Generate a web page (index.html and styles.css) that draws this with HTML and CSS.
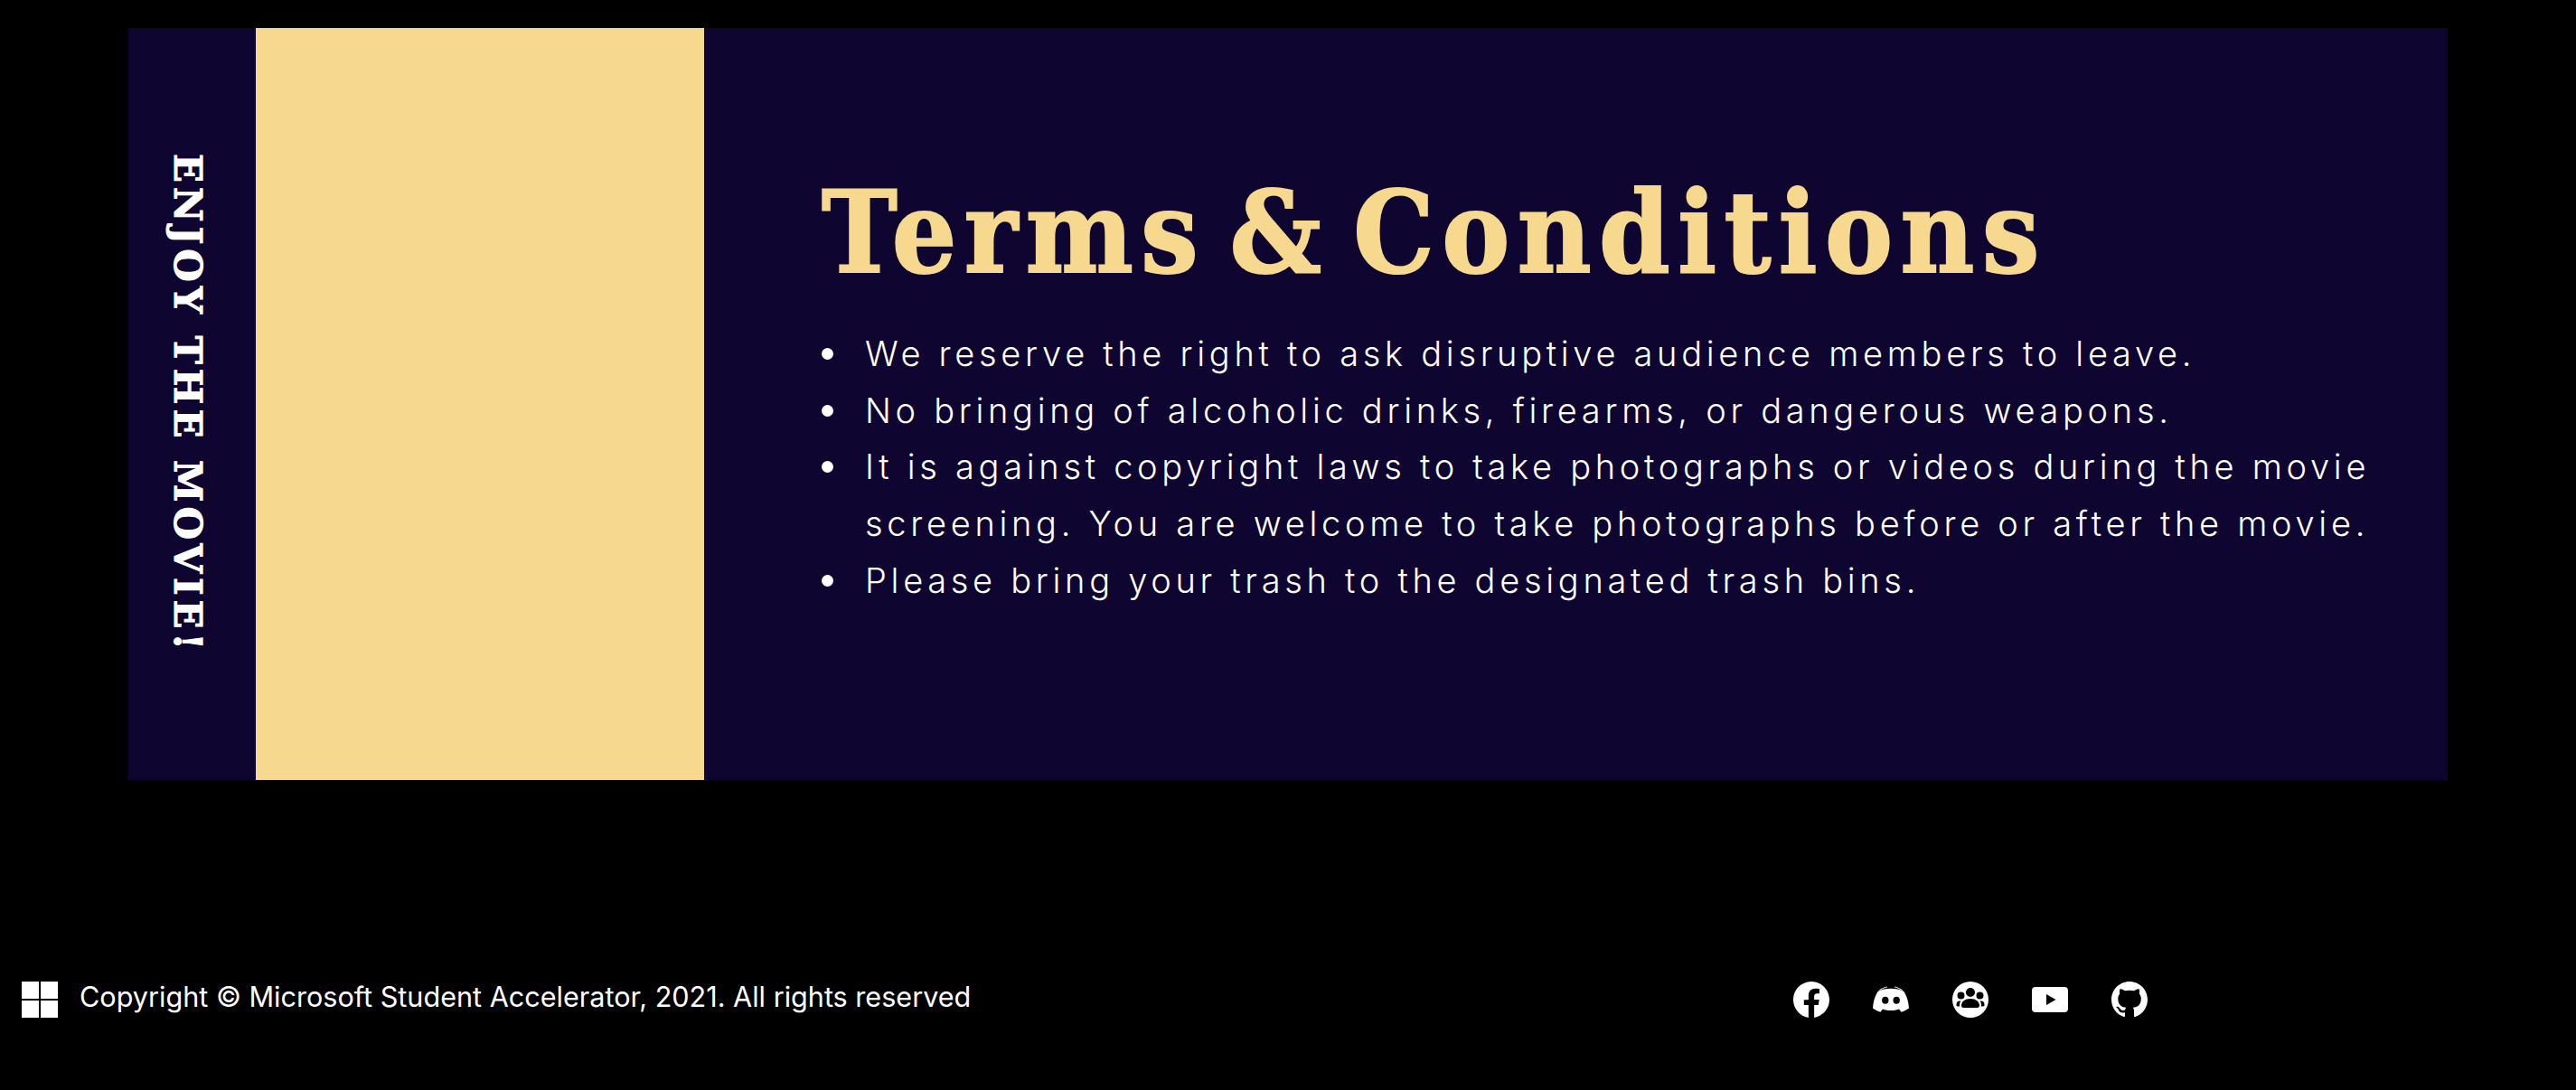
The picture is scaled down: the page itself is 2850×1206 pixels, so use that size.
FILE: index.html
```html
<!DOCTYPE html>
<html lang="en">
<head>
    <meta charset="UTF-8">
    <meta name="viewport" content="width=device-width, initial-scale=1.0">
    <title>Terms &amp; Conditions</title>
    <link rel="stylesheet" href="styles.css">
</head>
<body>

    <div class="ticket">
        <div class="strip"><span>ENJOY THE MOVIE!</span></div>
        <div class="stub"></div>
        <div class="terms">
            <h1>Terms &amp; Conditions</h1>
            <ul>
                <li>We reserve the right to ask disruptive audience members to leave.</li>
                <li>No bringing of alcoholic drinks, firearms, or dangerous weapons.</li>
                <li>It is against copyright laws to take photographs or videos during the movie screening. You are welcome to take photographs before or after the movie.</li>
                <li>Please bring your trash to the designated trash bins.</li>
            </ul>
        </div>
    </div>

    <div class="footer">
        <div class="copyright">
            <div class="logo"><i></i><i></i><i></i><i></i></div>
            <span>Copyright © Microsoft Student Accelerator, 2021. All rights reserved</span>
        </div>
        <div class="social">
            <!-- Facebook -->
            <svg viewBox="0 0 16 16"><path d="M16 8.049c0-4.446-3.582-8.05-8-8.05C3.58 0-.002 3.603-.002 8.05c0 4.017 2.926 7.347 6.75 7.951v-5.625h-2.03V8.05H6.75V6.275c0-2.017 1.195-3.131 3.022-3.131.876 0 1.791.157 1.791.157v1.98h-1.009c-.993 0-1.303.621-1.303 1.258v1.51h2.218l-.354 2.326H9.25V16c3.824-.604 6.75-3.934 6.75-7.951z"/></svg>
            <!-- Discord -->
            <svg viewBox="0 0 40 40"><path d="M7 9.5C10 7.3 13 6 16 5.400L16.300 6.300C13.300 7 10.300 8.200 7.600 10ZM33 9.500C30 7.300 27 6 24 5.400L23.700 6.300C26.700 7 29.700 8.200 32.400 10Z"/><path fill-rule="evenodd" d="M5.500 11C9.800 8.500 14.500 7.800 20 7.800S30.200 8.500 34.500 11C37.500 16 39.600 22 40 29.500C37.500 31.400 34.500 32.800 31.600 33.800L29 30.400C25.900 31.600 23 32 20 32S14.100 31.600 11 30.400L8.400 33.800C5.500 32.800 2.500 31.400 0 29.500C.4 22 2.500 16 5.500 11ZM13.800 16.800A3.700 4 0 1 0 13.800 24.800A3.700 4 0 1 0 13.800 16.800ZM26.200 16.800A3.700 4 0 1 0 26.200 24.800A3.700 4 0 1 0 26.200 16.800Z"/></svg>
            <!-- Community -->
            <svg viewBox="0 0 40 40"><path fill-rule="evenodd" d="M20 0A20 20 0 1 0 20 40A20 20 0 1 0 20 0ZM20 7A5 5 0 1 1 20 17A5 5 0 1 1 20 7ZM9.500 11.500A4 4 0 1 1 9.500 19.500A4 4 0 1 1 9.500 11.500ZM30.500 11.500A4 4 0 1 1 30.500 19.500A4 4 0 1 1 30.500 11.500ZM20 19C26 19 30 22.500 30 26.500C30 28.500 28.500 29 27 29H13C11.500 29 10 28.500 10 26.500C10 22.500 14 19 20 19ZM8 21.500C8.500 21.500 9 21.500 9.500 21.600C8.300 23.200 7.800 25 8 27.500H6C4.500 27.500 4.500 26.500 4.500 25.500C4.500 23 6 21.500 8 21.500ZM32 21.500C34 21.500 35.500 23 35.500 25.500C35.500 26.500 35.500 27.500 34 27.500H32C32.200 25 31.700 23.200 30.500 21.600C31 21.500 31.500 21.500 32 21.500Z"/></svg>
            <!-- YouTube -->
            <svg viewBox="0 0 40 40"><path fill-rule="evenodd" d="M4 6H36C38.500 6 40 7.500 40 10V30C40 32.500 38.500 34 36 34H4C1.500 34 0 32.500 0 30V10C0 7.500 1.500 6 4 6ZM16 14V26L26.500 20Z"/></svg>
            <!-- GitHub -->
            <svg viewBox="0 0 16 16"><path d="M8 0C3.58 0 0 3.58 0 8c0 3.54 2.29 6.53 5.47 7.59.4.07.55-.17.55-.38 0-.19-.01-.82-.01-1.49-2.01.37-2.53-.49-2.69-.94-.09-.23-.48-.94-.82-1.13-.28-.15-.68-.52-.01-.53.63-.01 1.08.58 1.23.82.72 1.21 1.87.87 2.33.66.07-.52.28-.87.51-1.07-1.78-.2-3.64-.89-3.64-3.95 0-.87.31-1.59.82-2.15-.08-.2-.36-1.02.08-2.12 0 0 .67-.21 2.2.82.64-.18 1.32-.27 2-.27.68 0 1.36.09 2 .27 1.53-1.04 2.2-.82 2.2-.82.44 1.1.16 1.92.08 2.12.51.56.82 1.27.82 2.15 0 3.07-1.87 3.75-3.65 3.95.29.25.54.73.54 1.48 0 1.07-.01 1.93-.01 2.2 0 .21.15.46.55.38A8.012 8.012 0 0 0 16 8c0-4.42-3.58-8-8-8z"/></svg>
        </div>
    </div>

</body>
</html>
```

FILE: styles.css
```css
body {
    margin: 0;
    background-color: #000;
    color: #fff;
    font-family: Inter, sans-serif;
}
.ticket {
    display: flex;
    width: 2566px;
    height: 832px;
    margin: 31px 0 0 142px;
    background-color: #0e0630;
}
.strip {
    width: 141px;
    display: flex;
    align-items: center;
    justify-content: center;
    padding-right: 10px;
    box-sizing: border-box;
}
.strip span {
    writing-mode: vertical-rl;
    font-family: "DejaVu Serif", serif;
    font-weight: bold;
    font-size: 42px;
    letter-spacing: 5px;
    -webkit-text-stroke: 1px #fff;
    white-space: nowrap;
}
.stub {
    width: 496px;
    background-color: #f6d98f;
}
.terms {
    flex: 1;
    padding: 136px 60px 0 130px;
}
h1 {
    margin: 0;
    font-family: "DejaVu Serif Condensed", "DejaVu Serif", serif;
    font-stretch: condensed;
    font-weight: bold;
    font-size: 125px;
    line-height: 180px;
    letter-spacing: 8.5px;
    word-spacing: -21px;
    -webkit-text-stroke: 2px #f6d98f;
    color: #f6d98f;
    white-space: nowrap;
}
ul {
    margin: 13px 0 0;
    padding: 0;
    list-style: none;
    font-size: 38px;
    font-weight: 300;
    line-height: 62.7px;
    letter-spacing: 4.7px;
}
li {
    display: flex;
}
li::before {
    content: "";
    flex: none;
    width: 13px;
    height: 13px;
    margin: 25px 35px 0 0;
    border-radius: 50%;
    background-color: #fff;
}
.footer {
    display: flex;
    align-items: center;
    margin-top: 223px;
}
.copyright {
    display: flex;
    align-items: center;
    gap: 24px;
    width: 1984px;
    padding-left: 24px;
    box-sizing: border-box;
    font-size: 30.6px;
}
.copyright span {
    line-height: 30px;
    margin-bottom: 6px;
}
.logo {
    display: grid;
    grid-template-columns: 19px 19px;
    grid-auto-rows: 19px;
    gap: 2px;
}
.logo i {
    background-color: #fff;
}
.social {
    display: flex;
    gap: 48px;
}
.social svg {
    width: 40px;
    height: 40px;
    fill: #fff;
}
```
